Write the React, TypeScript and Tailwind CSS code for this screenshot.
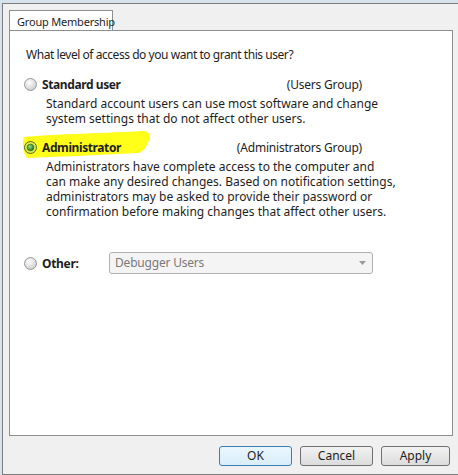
import React from "react";

function Radio({ checked }: { checked?: boolean }) {
  return (
    <svg width="13" height="13" viewBox="0 0 13 13" className="shrink-0">
      <defs>
        <radialGradient id="rg" cx="40%" cy="35%" r="70%">
          <stop offset="0%" stopColor="#ffffff" />
          <stop offset="100%" stopColor="#c9c9c9" />
        </radialGradient>
        <radialGradient id="dot" cx="40%" cy="35%" r="70%">
          <stop offset="0%" stopColor="#8be07a" />
          <stop offset="100%" stopColor="#1f6b1c" />
        </radialGradient>
      </defs>
      <circle cx="6.5" cy="6.5" r="6" fill={checked ? "#d8e64a" : "url(#rg)"} stroke={checked ? "#5b6b1a" : "#9a9a9a"} strokeWidth="1" />
      {checked && <circle cx="6.5" cy="6.5" r="3.3" fill="url(#dot)" stroke="#2b5a1e" strokeWidth="0.6" />}
    </svg>
  );
}

export default function App() {
  const font = { fontFamily: '"Noto Sans", "Open Sans", sans-serif' };
  return (
    <div className="w-[458px] h-[475px] bg-[#d6e3ef] overflow-hidden text-[12px] text-[#1e1e1e]" style={font}>
      <div className="ml-[2px] mt-[3px] h-[472px] bg-[#f0f0f0] border-l border-t border-b border-[#7d7d7d] flex flex-col">
        <div className="pl-[6px] pt-[6px]">
          <div className="w-[104px] h-[21px] bg-white border border-b-0 border-[#8e8f8f] pl-[7px] flex items-center leading-none whitespace-nowrap text-[11px] tracking-[-0.2px]">
            Group Membership
          </div>
        </div>
        <div className="relative ml-[6px] w-[444px] h-[406px] -mt-px bg-white border border-[#8e8f8f]">
          <svg className="absolute left-[12px] top-[100px]" width="130" height="28" viewBox="0 0 130 28">
            <path d="M2 6 C30 3 90 2 122 0 C128 1 129 5 127 9 C124 17 121 21 116 22 C80 24 30 26 6 27 C1 25 0 10 2 6 Z" fill="#ffff1a" />
          </svg>
          <div className="relative pl-[16px] pt-[16px]">
            <div className="leading-[15px] tracking-[-0.45px]">What level of access do you want to grant this user?</div>

            <div className="mt-[15px] flex items-center -ml-[2px] w-[338px]">
              <Radio />
              <span className="ml-[5px] font-bold leading-[15px] tracking-[-0.4px]">Standard user</span>
              <span className="ml-auto leading-[15px] tracking-[-0.2px]">(Users Group)</span>
            </div>
            <p className="pl-[20px] mt-[4px] leading-[15px] whitespace-nowrap">
              Standard account users can use most software and change<br />
              system settings that do not affect other users.
            </p>

            <div className="mt-[14px] flex items-center -ml-[2px] w-[338px]">
              <Radio checked />
              <span className="ml-[5px] font-bold leading-[15px] tracking-[-0.4px]">Administrator</span>
              <span className="ml-auto leading-[15px] tracking-[-0.2px]">(Administrators Group)</span>
            </div>
            <p className="pl-[20px] mt-[4px] leading-[15px] whitespace-nowrap">
              Administrators have complete access to the computer and<br />
              can make any desired changes. Based on notification settings,<br />
              administrators may be asked to provide their password or<br />
              confirmation before making changes that affect other users.
            </p>

            <div className="mt-[33px] flex items-center -ml-[2px]">
              <Radio />
              <span className="ml-[5px] font-bold leading-[15px] w-[67px] tracking-[-0.3px]">Other:</span>
              <div className="w-[264px] h-[22px] rounded-[3px] border border-[#adb2b5] bg-[#f4f4f4] flex items-center pl-[5px] pr-[6px] text-[#7a7a7a] tracking-[-0.2px]">
                <span>Debugger Users</span>
                <svg className="ml-auto" width="7" height="4" viewBox="0 0 7 4">
                  <path d="M0 0 H7 L3.5 4 Z" fill="#9a9a9a" />
                </svg>
              </div>
            </div>
          </div>
        </div>
        <div className="flex justify-end gap-[8px] pr-[8px] mt-[10px]">
          <button className="w-[73px] h-[20px] rounded-[3px] border border-[#3c7fb1] bg-gradient-to-b from-[#eaf6fd] to-[#d9eefb] leading-none text-[#1e1e1e]">OK</button>
          <button className="w-[73px] h-[20px] rounded-[3px] border border-[#707070] bg-gradient-to-b from-[#f2f2f2] to-[#dcdcdc] leading-none text-[#1e1e1e]">Cancel</button>
          <button className="w-[69px] h-[20px] rounded-[3px] border border-[#707070] bg-gradient-to-b from-[#f2f2f2] to-[#dcdcdc] leading-none text-[#1e1e1e]">Apply</button>
        </div>
      </div>
    </div>
  );
}
